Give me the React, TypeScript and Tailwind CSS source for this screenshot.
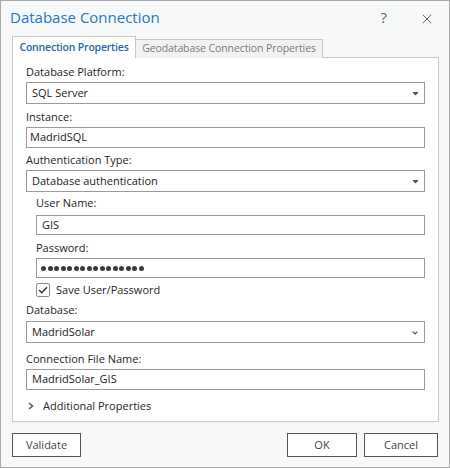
import { X } from 'lucide-react'

const font = "font-['Open_Sans','Noto_Sans',sans-serif]"

function Label({ text, className = '' }: { text: string; className?: string }) {
  return <div className={`h-[16px] leading-[16px] text-[11px] text-[#262626] ${className}`}>{text}</div>
}

function Field({ value, className = '', h = 'h-[21px]' }: { value: string; className?: string; h?: string }) {
  return (
    <div className={`${h} border border-[#9a9a9a] bg-white flex items-center px-[3px] text-[11px] text-[#1a1a1a] ${className}`}>
      {value}
    </div>
  )
}

function Dropdown({ value, chevron = false, className = '' }: { value: string; chevron?: boolean; className?: string }) {
  return (
    <div className={`h-[22px] border border-[#9a9a9a] bg-white flex items-center pl-[5px] pr-[5px] text-[11px] text-[#1a1a1a] ${className}`}>
      <span className="flex-1">{value}</span>
      {chevron ? (
        <svg width="6" height="4" viewBox="0 0 6 4" className="mr-[1px] mt-[1px]">
          <path d="M0.6 0.6 L3 3 L5.4 0.6" fill="none" stroke="#555" strokeWidth="1.2" />
        </svg>
      ) : (
        <svg width="5" height="4" viewBox="0 0 5 4" className="mr-[1px] mt-[1px]">
          <path d="M0 0 H5 V1 L2.5 3.5 L0 1 Z" fill="#555" />
        </svg>
      )}
    </div>
  )
}

export default function App() {
  return (
    <div className={`w-[450px] h-[468px] border border-[#aaaaaa] bg-[#f7f8f8] flex flex-col ${font}`}>
      {/* Title bar */}
      <div className="h-[35px] flex items-center pl-[9px] pr-[14px]">
        <div className="flex-1 text-[15px] text-[#2378bd] leading-none pb-[2px]">Database Connection</div>
        <div className="text-[15px] text-[#666] mr-[32px] pb-[2px]">?</div>
        <X size={16} strokeWidth={1.2} color="#444" />
      </div>

      {/* Tabs */}
      <div className="flex items-end pl-[11px] h-[22px] relative z-10">
        <div className="h-[22px] w-[124px] border border-[#c8c8c8] border-b-0 bg-white flex items-center justify-center text-[10.5px] tracking-[-0.2px] font-semibold text-[#1f67a8]">
          Connection Properties
        </div>
        <div className="h-[19px] w-[187px] border border-[#c8c8c8] border-l-0 border-b-0 bg-[#f2f2f2] flex items-center justify-center text-[10.5px] tracking-[-0.1px] text-[#7a7a7a]">
          Geodatabase Connection Properties
        </div>
      </div>

      {/* Panel */}
      <div className="ml-[11px] w-[427px] -mt-[1px] border border-[#c8c8c8] bg-white px-[13px] pb-[7px]">
        <Label text="Database Platform:" className="mt-[6px]" />
        <Dropdown value="SQL Server" className="mt-[2px]" />

        <Label text="Instance:" className="mt-[5px]" />
        <Field value="MadridSQL" className="mt-[2px]" />

        <Label text="Authentication Type:" className="mt-[4px]" />
        <Dropdown value="Database authentication" className="mt-[2px] pl-[3px]" />

        <div className="pl-[10px]">
          <Label text="User Name:" className="mt-[3px]" />
          <Field value="GIS" h="h-[20px]" className="mt-[4px] pl-[5px]" />

          <Label text="Password:" className="mt-[5px]" />
          <div className="mt-[2px] h-[20px] border border-[#9a9a9a] bg-white flex items-center pl-[4px] gap-[1.5px]">
            {Array.from({ length: 16 }).map((_, i) => (
              <span key={i} className="w-[5px] h-[5px] rounded-full bg-[#3a3a3a]" />
            ))}
          </div>

          <div className="mt-[5px] h-[14px] flex items-center">
            <div className="w-[14px] h-[14px] border border-[#8a8a8a] rounded-[2px] bg-white flex items-center justify-center">
              <svg width="10" height="8" viewBox="0 0 10 8">
                <path d="M1 4 L3.8 6.8 L9 1.3" fill="none" stroke="#333" strokeWidth="1.4" />
              </svg>
            </div>
            <span className="ml-[6px] text-[11px] text-[#262626]">Save User/Password</span>
          </div>
        </div>

        <Label text="Database:" className="mt-[5px]" />
        <Dropdown value="MadridSolar" chevron className="mt-[3px]" />

        <Label text="Connection File Name:" className="mt-[8px]" />
        <Field value="MadridSolar_GIS" className="mt-[2px] pl-[5px]" />

        <div className="mt-[8px] h-[16px] flex items-center pl-[2px] text-[11px] text-[#262626]">
          <svg width="6" height="8" viewBox="0 0 6 8" className="mr-[9px]">
            <path d="M1 1 L4.5 4 L1 7" fill="none" stroke="#555" strokeWidth="1.6" />
          </svg>
          Additional Properties
        </div>
      </div>

      {/* Buttons */}
      <div className="mt-[11px] flex px-[11px]">
        <button className="w-[69px] h-[24px] border border-[#555] bg-white text-[11px] text-[#444]">Validate</button>
        <div className="flex-1" />
        <button className="w-[70px] h-[24px] border border-[#555] bg-white text-[11px] text-[#444]">OK</button>
        <button className="ml-[7px] w-[74px] h-[24px] border border-[#555] bg-white text-[11px] text-[#444]">Cancel</button>
      </div>
    </div>
  )
}
